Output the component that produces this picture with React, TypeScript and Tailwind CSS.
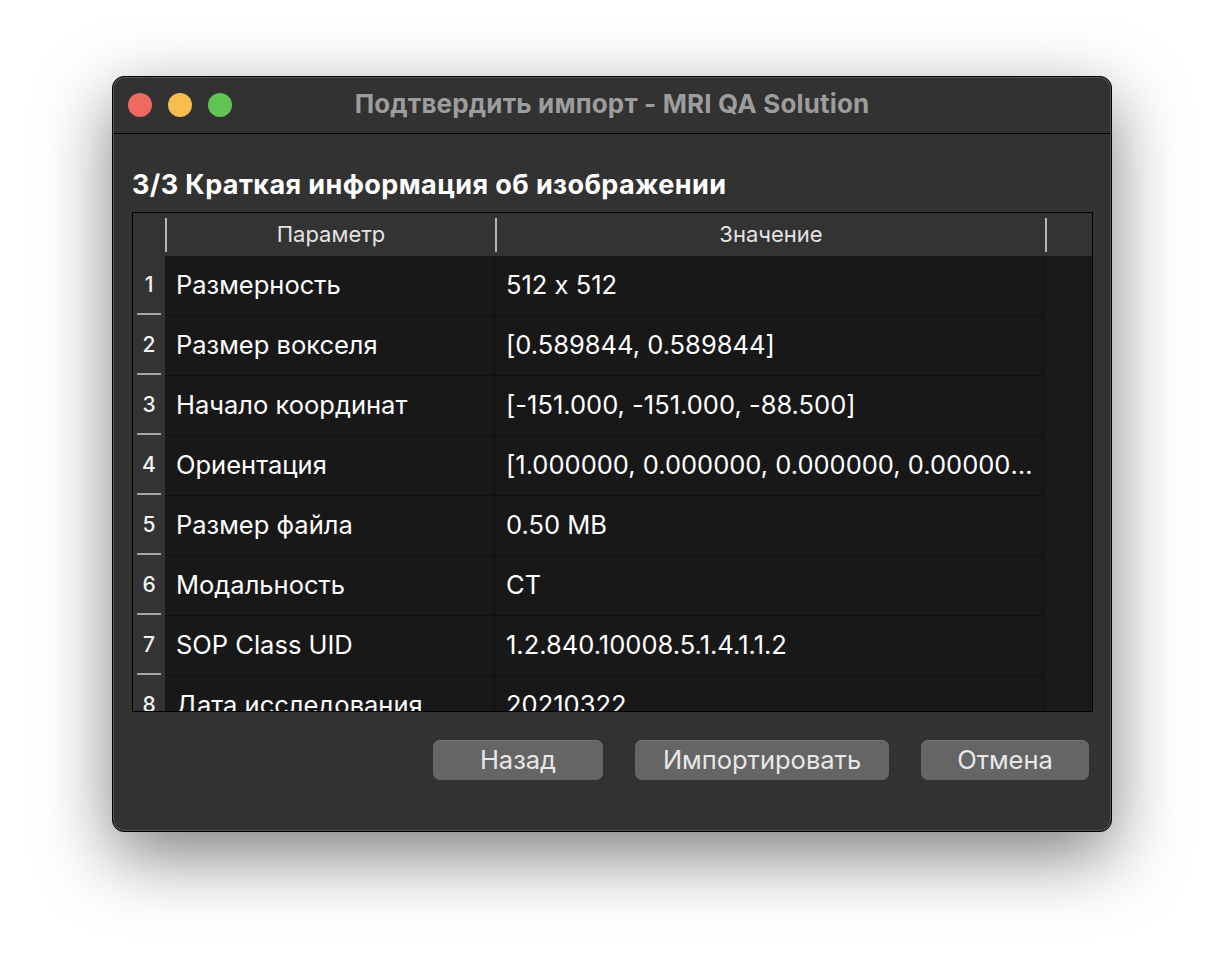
import React from 'react';

const rows = [
  ['Размерность', '512 x 512'],
  ['Размер вокселя', '[0.589844, 0.589844]'],
  ['Начало координат', '[-151.000, -151.000, -88.500]'],
  ['Ориентация', '[1.000000, 0.000000, 0.000000, 0.000000, 1.000000, 0.000000]'],
  ['Размер файла', '0.50 MB'],
  ['Модальность', 'CT'],
  ['SOP Class UID', '1.2.840.10008.5.1.4.1.1.2'],
  ['Дата исследования', '20210322'],
];

const font = { fontFamily: 'Inter, "Noto Sans", sans-serif' };

function HeaderSep() {
  return <div className="w-[2px] h-[34px] self-center bg-[#b5b5b5] shrink-0" />;
}

export default function App() {
  return (
    <div className="min-h-screen bg-white pt-[76px] pl-[112px] [font-feature-settings:'calt'_0]" style={font}>
      <div className="w-[1000px] h-[756px] rounded-[12px] bg-[#323232] border border-black shadow-[inset_0_0_0_1px_rgba(255,255,255,0.18),0_24px_70px_rgba(0,0,0,0.5)] flex flex-col overflow-hidden">
        {/* title bar */}
        <div className="h-[57px] border-b border-black flex items-center relative shrink-0">
          <div className="flex gap-[16px] pl-[15px] relative z-10">
            <span className="w-6 h-6 rounded-full bg-[#ee6a5f]" />
            <span className="w-6 h-6 rounded-full bg-[#f5be4f]" />
            <span className="w-6 h-6 rounded-full bg-[#61c454]" />
          </div>
          <div className="absolute inset-0 pb-[3px] flex items-center justify-center text-[26px] font-bold text-[#9d9d9d] tracking-[0.15px]">
            Подтвердить импорт - MRI QA Solution
          </div>
        </div>

        <div className="px-[19px] pt-[36px]">
          <h1 className="text-[27px] leading-[30px] font-bold text-white tracking-[0.4px]">3/3 Краткая информация об изображении</h1>

          <div className="mt-[12px] w-[961px] h-[500px] border border-black bg-[#181818] overflow-hidden">
            <div className="h-[43px] bg-[#333333] flex">
              <div className="w-[32px] shrink-0" />
              <HeaderSep />
              <div className="w-[328px] shrink-0 flex items-center justify-center text-[22px] text-[#e4e4e4]">Параметр</div>
              <HeaderSep />
              <div className="w-[548px] shrink-0 flex items-center justify-center text-[22px] text-[#e4e4e4]">Значение</div>
              <HeaderSep />
              <div className="flex-1" />
            </div>
            {rows.map(([k, v], i) => (
              <div key={i} className="h-[60px] flex">
                <div className="w-[32px] shrink-0 bg-[#333333] flex flex-col items-center">
                  <div className="flex-1 flex items-center text-[21px] font-medium text-[#f2f2f2]">{i + 1}</div>
                  <div className="w-[24px] h-[2px] bg-[#a8a8a8] mb-[1px]" />
                </div>
                <div className="w-[330px] shrink-0 border-r border-b border-[#101010] flex items-center pl-[11px] text-[25.5px] text-white">
                  {k}
                </div>
                <div className="w-[550px] shrink-0 border-r border-b border-[#101010] flex items-center pl-[11px] pr-[2px] text-[25.5px] text-white min-w-0">
                  <span className="truncate">{v}</span>
                </div>
                <div className="flex-1 bg-[#1a1a1a]" />
              </div>
            ))}
          </div>

          <div className="mt-[28px] flex justify-end gap-[32px] pr-[3px]">
            <button className="w-[170px] h-[40px] rounded-[7px] bg-[#656565] text-[25.5px] text-[#e8e8e8] shadow-[inset_0_1px_0_rgba(255,255,255,0.1)]">Назад</button>
            <button className="w-[254px] h-[40px] rounded-[7px] bg-[#656565] text-[25.5px] text-[#e8e8e8] shadow-[inset_0_1px_0_rgba(255,255,255,0.1)]">Импортировать</button>
            <button className="w-[168px] h-[40px] rounded-[7px] bg-[#656565] text-[25.5px] text-[#e8e8e8] shadow-[inset_0_1px_0_rgba(255,255,255,0.1)]">Отмена</button>
          </div>
        </div>
      </div>
    </div>
  );
}
